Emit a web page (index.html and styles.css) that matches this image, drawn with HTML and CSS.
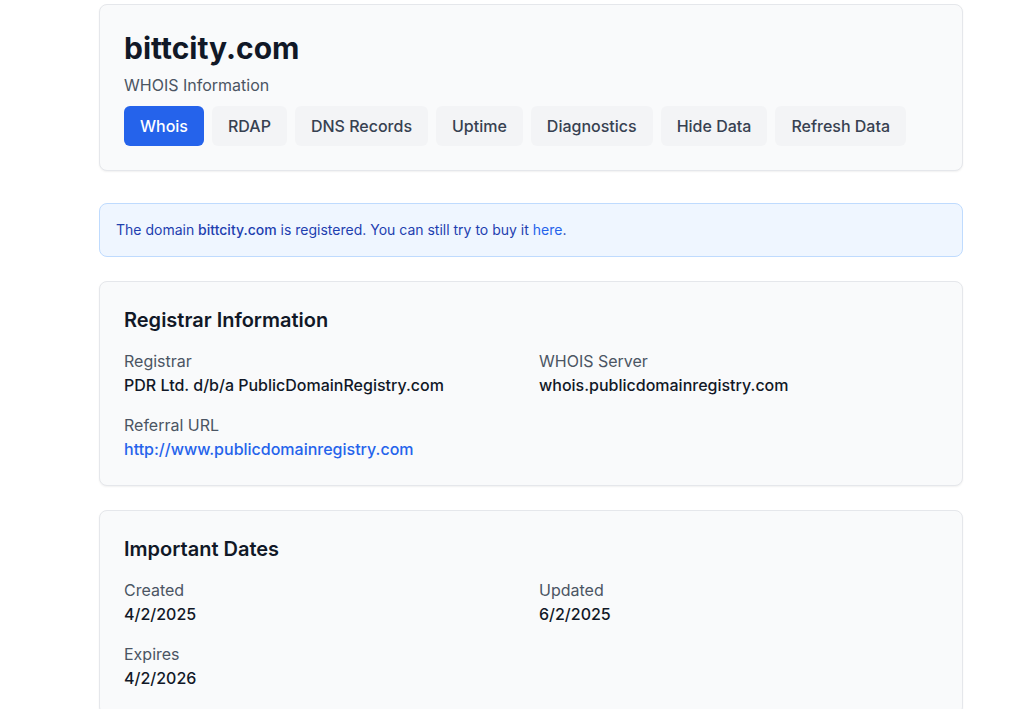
FILE: index.html
```html
<!DOCTYPE html>
<html lang="en">
  <head>
    <meta charset="UTF-8" />
    <meta name="viewport" content="width=device-width, initial-scale=1.0" />
    <title>bittcity.com - WHOIS</title>
    <link rel="stylesheet" href="styles.css">
  </head>
  <body>
    <div class="container">
      <div class="card header-card">
        <h1 class="domain-title">bittcity.com</h1>
        <p class="subtitle">WHOIS Information</p>
        <div class="tabs">
          <button class="btn active">Whois</button>
          <button class="btn">RDAP</button>
          <button class="btn">DNS Records</button>
          <button class="btn">Uptime</button>
          <button class="btn">Diagnostics</button>
          <button class="btn">Hide Data</button>
          <button class="btn">Refresh Data</button>
        </div>
      </div>

      <div class="alert">
        The domain <strong>bittcity.com</strong> is registered. You can still try to buy it <a href="#">here</a>.
      </div>

      <div class="card">
        <h3 class="card-title">Registrar Information</h3>
        <div class="info-grid">
          <div class="info-item">
            <span class="label">Registrar</span>
            <span class="value">PDR Ltd. d/b/a PublicDomainRegistry.com</span>
          </div>
          <div class="info-item">
            <span class="label">WHOIS Server</span>
            <span class="value">whois.publicdomainregistry.com</span>
          </div>
          <div class="info-item">
            <span class="label">Referral URL</span>
            <a class="value link" href="#">http://www.publicdomainregistry.com</a>
          </div>
        </div>
      </div>

      <div class="card">
        <h3 class="card-title">Important Dates</h3>
        <div class="info-grid">
          <div class="info-item">
            <span class="label">Created</span>
            <span class="value">4/2/2025</span>
          </div>
          <div class="info-item">
            <span class="label">Updated</span>
            <span class="value">6/2/2025</span>
          </div>
          <div class="info-item">
            <span class="label">Expires</span>
            <span class="value">4/2/2026</span>
          </div>
        </div>
      </div>
    </div>
  </body>
</html>
```

FILE: styles.css
```css
body {
  font-family: Inter, "Noto Sans", Arial, sans-serif;
  background-color: #ffffff;
  color: #111827;
  margin: 0;
  padding: 0;
}

.container {
  width: 864px;
  margin: 4px 0 0 99px;
  display: flex;
  flex-direction: column;
}

.card {
  background-color: #f9fafb;
  border: 1px solid #e5e7eb;
  border-radius: 8px;
  box-shadow: 0 1px 2px rgba(0, 0, 0, 0.06);
  padding: 24px;
  margin-bottom: 24px;
}

.header-card {
  margin-bottom: 32px;
}

.domain-title {
  font-size: 30px;
  line-height: 36px;
  font-weight: 700;
  color: #111827;
  margin: 1px 0 7px 0;
}

.subtitle {
  font-size: 16px;
  line-height: 24px;
  color: #4b5563;
  margin: 0 0 9px 0;
}

.tabs {
  display: flex;
  gap: 8px;
}

.btn {
  font-family: inherit;
  font-size: 16px;
  line-height: 24px;
  font-weight: 500;
  padding: 8px 16px;
  border: none;
  border-radius: 6px;
  background-color: #f3f4f6;
  color: #374151;
  cursor: pointer;
}

.btn.active {
  background-color: #2563eb;
  color: #ffffff;
}

.alert {
  background-color: #eff6ff;
  border: 1px solid #bfdbfe;
  border-radius: 8px;
  padding: 16px;
  font-size: 14px;
  line-height: 20px;
  color: #1e40af;
  margin-bottom: 24px;
}

.alert strong {
  font-weight: 500;
}

.alert a {
  color: #2563eb;
  text-decoration: none;
}

.card-title {
  font-size: 20px;
  line-height: 28px;
  font-weight: 600;
  color: #111827;
  margin: 0 0 15px 0;
}

.info-grid {
  display: grid;
  grid-template-columns: 1fr 1fr;
  gap: 16px;
}

.info-item {
  display: flex;
  flex-direction: column;
  align-items: flex-start;
}

.label {
  font-size: 16px;
  line-height: 24px;
  color: #4b5563;
}

.value {
  font-size: 16px;
  line-height: 24px;
  font-weight: 500;
  color: #111827;
}

.link {
  color: #2563eb;
  text-decoration: none;
}
```
